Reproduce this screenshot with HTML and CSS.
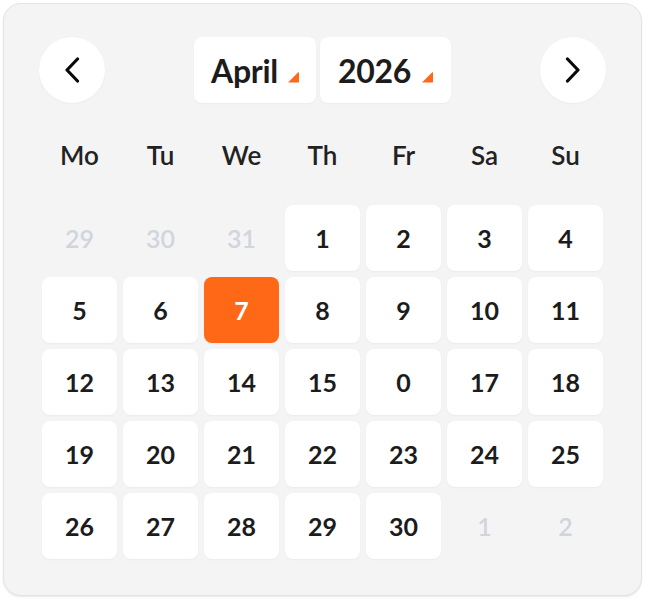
FILE: index.html
```html
<!DOCTYPE html>
<html lang="en">
<head>
    <meta charset="UTF-8">
    <meta name="viewport" content="width=device-width, initial-scale=1.0">
    <title>Date Picker</title>
    <link rel="stylesheet" href="styles.css">
</head>
<body>
<div class="datepicker">
    <div class="picker-header">
        <button class="nav-btn" aria-label="Previous month">
            <svg width="16" height="26" viewBox="0 0 16 26"><path d="M13.5 2 L3 13 L13.5 24" /></svg>
        </button>
        <div class="selects">
            <button class="select month">April<span class="caret"></span></button>
            <button class="select year">2026<span class="caret"></span></button>
        </div>
        <button class="nav-btn" aria-label="Next month">
            <svg width="16" height="26" viewBox="0 0 16 26"><path d="M2.5 2 L13 13 L2.5 24" /></svg>
        </button>
    </div>

    <div class="weekdays">
        <span>Mo</span><span>Tu</span><span>We</span><span>Th</span><span>Fr</span><span>Sa</span><span>Su</span>
    </div>

    <div class="days">
        <span class="day muted">29</span>
        <span class="day muted">30</span>
        <span class="day muted">31</span>
        <button class="day">1</button>
        <button class="day">2</button>
        <button class="day">3</button>
        <button class="day">4</button>
        <button class="day">5</button>
        <button class="day">6</button>
        <button class="day selected">7</button>
        <button class="day">8</button>
        <button class="day">9</button>
        <button class="day">10</button>
        <button class="day">11</button>
        <button class="day">12</button>
        <button class="day">13</button>
        <button class="day">14</button>
        <button class="day">15</button>
        <button class="day">0</button>
        <button class="day">17</button>
        <button class="day">18</button>
        <button class="day">19</button>
        <button class="day">20</button>
        <button class="day">21</button>
        <button class="day">22</button>
        <button class="day">23</button>
        <button class="day">24</button>
        <button class="day">25</button>
        <button class="day">26</button>
        <button class="day">27</button>
        <button class="day">28</button>
        <button class="day">29</button>
        <button class="day">30</button>
        <span class="day muted">1</span>
        <span class="day muted">2</span>
    </div>
</div>
</body>
</html>
```

FILE: styles.css
```css
:root {
    --bg-card: #f4f4f4;
    --bg-cell: #ffffff;
    --color-text: #1c1c1c;
    --color-muted: #d1d5dd;
    --color-accent: #ff6816;
    --border: #e4e4e6;
}

* {
    box-sizing: border-box;
    margin: 0;
    padding: 0;
}

body {
    padding: 3px;
    background: #ffffff;
    font-family: 'Lato', 'Inter', sans-serif;
    color: var(--color-text);
}

button {
    font: inherit;
    color: inherit;
    border: none;
    background: none;
    cursor: pointer;
}

.datepicker {
    width: 639px;
    height: 593px;
    padding: 33px 35px;
    border: 1px solid var(--border);
    border-radius: 18px;
    background: var(--bg-card);
    box-shadow: 0 1px 2px rgba(0, 0, 0, 0.1);
}

.picker-header {
    display: flex;
    justify-content: space-between;
    align-items: center;
    height: 66px;
}

.nav-btn {
    display: flex;
    align-items: center;
    justify-content: center;
    width: 66px;
    height: 66px;
    border-radius: 50%;
    background: var(--bg-cell);
    box-shadow: 0 1px 2px rgba(0, 0, 0, 0.04);
}

.nav-btn svg path {
    fill: none;
    stroke: #0a0a0a;
    stroke-width: 3.2;
    stroke-linecap: round;
    stroke-linejoin: round;
}

.selects {
    display: flex;
    gap: 4px;
}

.select {
    display: flex;
    align-items: center;
    height: 66px;
    padding: 0 17px;
    border-radius: 8px;
    background: var(--bg-cell);
    font-size: 32px;
    font-weight: 700;
    letter-spacing: -0.3px;
    box-shadow: 0 1px 2px rgba(0, 0, 0, 0.04);
}

.select.month {
    width: 122px;
}

.select.year {
    width: 131px;
    padding: 0 18px;
}

.caret {
    width: 11px;
    height: 11px;
    margin-left: auto;
    margin-top: 14px;
    background: var(--color-accent);
    clip-path: polygon(100% 0, 100% 100%, 0 100%);
    border-radius: 1px;
}

.weekdays {
    display: grid;
    grid-template-columns: repeat(7, 75px);
    column-gap: 6px;
    margin: 19px 3px 17px;
    height: 66px;
    align-items: center;
    text-align: center;
    font-size: 26px;
    font-weight: 600;
    color: #222222;
}

.days {
    display: grid;
    grid-template-columns: repeat(7, 75px);
    grid-auto-rows: 66px;
    gap: 6px;
    margin: 0 3px;
}

.day {
    display: flex;
    align-items: center;
    justify-content: center;
    border-radius: 8px;
    background: var(--bg-cell);
    font-size: 25px;
    font-weight: 700;
    box-shadow: 0 1px 2px rgba(0, 0, 0, 0.04);
}

.day.muted {
    background: none;
    box-shadow: none;
    color: var(--color-muted);
    font-weight: 600;
}

.day.selected {
    background: var(--color-accent);
    color: #ffffff;
}
```
